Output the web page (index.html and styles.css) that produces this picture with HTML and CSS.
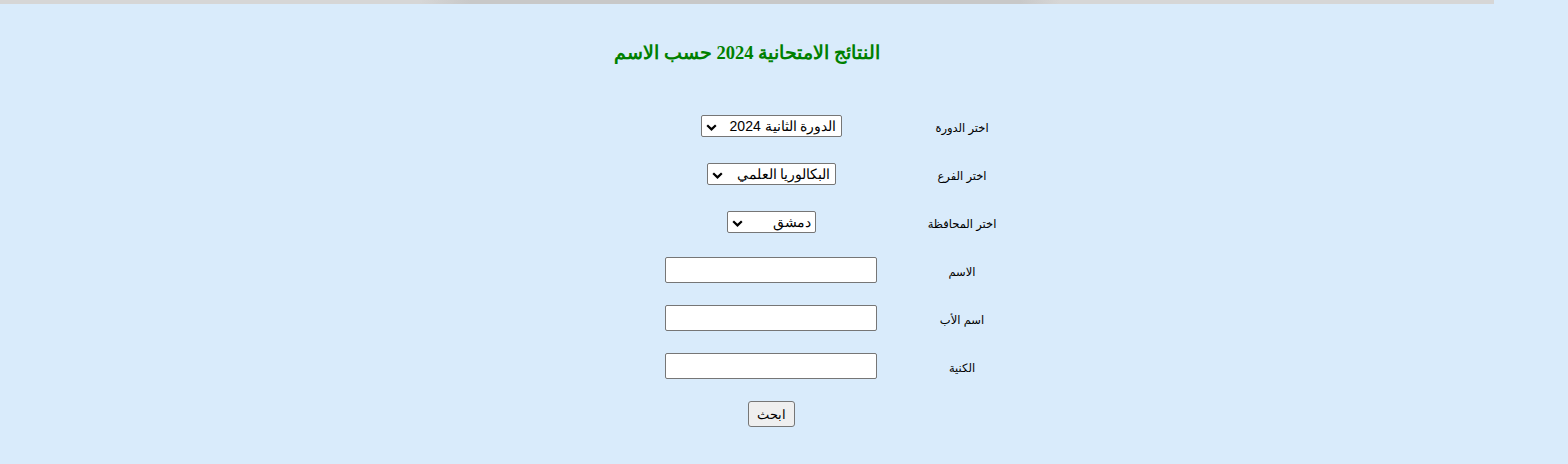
FILE: index.html
```html
<!DOCTYPE html>
<html lang="ar" dir="rtl">
<head>
<meta charset="utf-8">
<title>النتائج الامتحانية 2024 حسب الاسم</title>
<link rel="stylesheet" href="styles.css">
</head>
<body>
<div class="page">
  <div class="top-strip"></div>
  <h2 class="title">النتائج الامتحانية 2024 حسب الاسم</h2>
  <form class="search-form">
    <div class="row">
      <label class="label">اختر الدورة</label>
      <div class="control"><span class="sel-wrap"><select class="sel sel-session"><option>الدورة الثانية 2024</option></select><svg class="chev" width="11" height="7" viewBox="0 0 11 7"><path d="M1.2 1.2 L5.5 5.4 L9.8 1.2" fill="none" stroke="#000" stroke-width="2.2"/></svg></span></div>
    </div>
    <div class="row">
      <label class="label">اختر الفرع</label>
      <div class="control"><span class="sel-wrap"><select class="sel sel-branch"><option>البكالوريا العلمي</option></select><svg class="chev" width="11" height="7" viewBox="0 0 11 7"><path d="M1.2 1.2 L5.5 5.4 L9.8 1.2" fill="none" stroke="#000" stroke-width="2.2"/></svg></span></div>
    </div>
    <div class="row">
      <label class="label">اختر المحافظة</label>
      <div class="control"><span class="sel-wrap"><select class="sel sel-city"><option>دمشق</option></select><svg class="chev" width="11" height="7" viewBox="0 0 11 7"><path d="M1.2 1.2 L5.5 5.4 L9.8 1.2" fill="none" stroke="#000" stroke-width="2.2"/></svg></span></div>
    </div>
    <div class="row">
      <label class="label">الاسم</label>
      <div class="control"><input class="txt" type="text"></div>
    </div>
    <div class="row">
      <label class="label">اسم الأب</label>
      <div class="control"><input class="txt" type="text"></div>
    </div>
    <div class="row">
      <label class="label">الكنية</label>
      <div class="control"><input class="txt" type="text"></div>
    </div>
    <div class="row">
      <div class="label"></div>
      <div class="control"><button class="btn" type="button">ابحث</button></div>
    </div>
  </form>
</div>
</body>
</html>
```
FILE: styles.css
```css
html, body {
  margin: 0;
  padding: 0;
  background: #d9ebfb;
}
body {
  font-family: "Liberation Sans", Arial, "DejaVu Sans", sans-serif;
  color: #000;
}
.page {
  width: 1494px;
  margin: 0 auto 0 0;
}
.top-strip {
  height: 4px;
  background: linear-gradient(to right, #d6d6d6 0, #d6d6d6 420px, #c8c8c8 470px, #c8c8c8 1020px, #d6d6d6 1060px, #d6d6d6 100%);
}
.title {
  margin: 36px 0 0;
  height: 26px;
  text-align: center;
  font-family: "Liberation Serif", "Times New Roman", "DejaVu Serif", serif;
  font-weight: bold;
  font-size: 18.5px;
  line-height: 26px;
  color: #008000;
}
.search-form {
  margin: 36px auto 0 646px;
  width: 382px;
  display: flex;
  flex-direction: column;
}
.row {
  display: grid;
  grid-template-columns: 132px 250px;
  height: 48px;
  align-items: center;
}
.label {
  font-size: 11.5px;
  text-align: center;
  padding-top: 4px;
}
.control {
  display: flex;
  justify-content: center;
  align-items: center;
}
.sel-wrap {
  position: relative;
  display: inline-flex;
}
.sel {
  -webkit-appearance: none;
  appearance: none;
  height: 22px;
  box-sizing: border-box;
  font-family: "Liberation Sans", Arial, sans-serif;
  font-size: 14px;
  line-height: 20px;
  border: 1px solid #767676;
  border-radius: 2px;
  background: #fff;
  color: #000;
  padding: 0 4px 0 20px;
}
.chev {
  position: absolute;
  left: 5px;
  top: 9px;
  pointer-events: none;
}
.sel-session { width: 141px; }
.sel-branch { width: 129px; }
.sel-city { width: 89px; }
.txt {
  width: 212px;
  height: 26px;
  box-sizing: border-box;
  border: 1px solid #767676;
  border-radius: 2px;
  background: #fff;
  font-size: 13.33px;
  padding: 1px 2px;
}
.btn {
  width: 47px;
  height: 26px;
  box-sizing: border-box;
  border: 1px solid #767676;
  border-radius: 3px;
  background: #efefef;
  font-family: "Liberation Sans", Arial, sans-serif;
  font-size: 13.33px;
  color: #000;
  padding: 0;
}
```
